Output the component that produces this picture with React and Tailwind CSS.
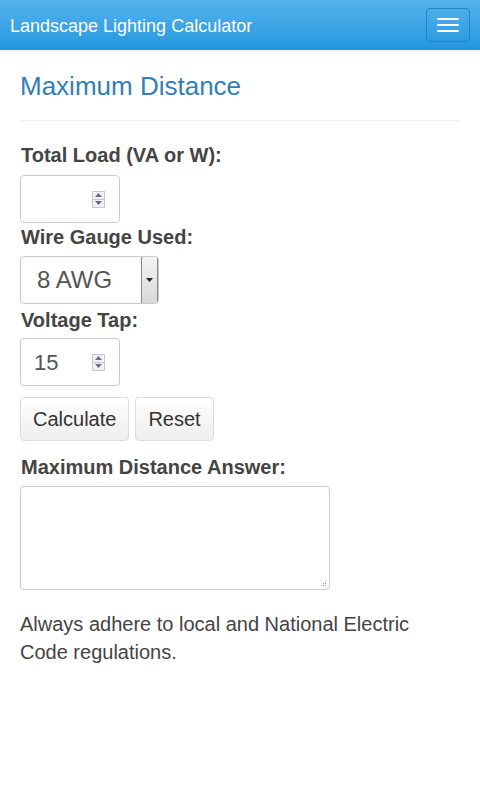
import React from 'react';

const font = { fontFamily: '"Liberation Sans", Arial, sans-serif' };

// small up/down stepper drawn like the old webkit spin button
const Spinner = () => (
  <div className="flex flex-col w-[13px] h-[17px] border border-[#c8c8d0] bg-[#f2f2f6]">
    <div className="flex-1 flex items-center justify-center border-b border-[#c8c8d0]">
      <svg width="7" height="4" viewBox="0 0 7 4"><path d="M0 4 L3.5 0 L7 4 Z" fill="#6a6a8a" /></svg>
    </div>
    <div className="flex-1 flex items-center justify-center">
      <svg width="7" height="4" viewBox="0 0 7 4"><path d="M0 0 L3.5 4 L7 0 Z" fill="#6a6a8a" /></svg>
    </div>
  </div>
);

const NumberBox = ({ value }) => (
  <div className="w-[100px] h-[48px] border border-[#ccc] rounded-[4px] bg-white flex items-center pl-[13px] pr-[14px]">
    <span className="flex-1 text-[22px] text-[#555]">{value}</span>
    <Spinner />
  </div>
);

const Label = ({ children }) => (
  <div className="text-[20px] font-bold text-[#444] leading-[22px] ml-[1px]">{children}</div>
);

export default function App() {
  return (
    <div className="w-[480px] min-h-[800px] bg-white" style={font}>
      {/* navbar */}
      <div className="h-[50px] bg-gradient-to-b from-[#54b4eb] to-[#2196e0] flex items-center justify-between pl-[10px] pr-[10px] shadow-[0_2px_4px_rgba(0,0,0,0.06)]">
        <span className="text-white text-[18px] mt-[2px]">Landscape Lighting Calculator</span>
        <button className="w-[44px] h-[34px] rounded-[4px] border border-[#1e86c9] flex flex-col items-center justify-center gap-[4px]">
          <span className="block w-[22px] h-[2px] bg-white rounded-[1px]" />
          <span className="block w-[22px] h-[2px] bg-white rounded-[1px]" />
          <span className="block w-[22px] h-[2px] bg-white rounded-[1px]" />
        </button>
      </div>

      <div className="px-[20px]">
        <h1 className="text-[26px] text-[#317eb8] pt-[21px] leading-[30px]">Maximum Distance</h1>
        <div className="h-px bg-[#eee] mt-[19px] mb-[23px]" />

        <Label>Total Load (VA or W):</Label>
        <div className="mt-[9px]">
          <NumberBox value="" />
        </div>

        <div className="mt-[3px]"><Label>Wire Gauge Used:</Label></div>
        <div className="mt-[8px] w-[139px] h-[48px] border border-[#ccc] rounded-[4px] bg-white flex items-stretch overflow-hidden">
          <span className="flex-1 flex items-center pl-[16px] text-[24px] text-[#555]">8 AWG</span>
          <div className="w-[17px] my-[-1px] border border-[#888] rounded-[2px] bg-gradient-to-b from-[#f4f4f4] to-[#d8d8d8] flex items-center justify-center">
            <svg width="7" height="4" viewBox="0 0 7 4"><path d="M0 0 L3.5 4 L7 0 Z" fill="#222" /></svg>
          </div>
        </div>

        <div className="mt-[5px]"><Label>Voltage Tap:</Label></div>
        <div className="mt-[7px]">
          <NumberBox value="15" />
        </div>

        <div className="flex gap-[6px] mt-[11px]">
          <button className="h-[44px] px-[12px] border border-[#ddd] rounded-[4px] bg-gradient-to-b from-white to-[#eee] text-[20px] text-[#333]">Calculate</button>
          <button className="h-[44px] px-[12px] border border-[#ddd] rounded-[4px] bg-gradient-to-b from-white to-[#eee] text-[20px] text-[#333]">Reset</button>
        </div>

        <div className="mt-[15px]"><Label>Maximum Distance Answer:</Label></div>
        <div className="mt-[8px] w-[310px] h-[104px] border border-[#ccc] rounded-[4px] bg-white relative">
          <svg className="absolute right-[2px] bottom-[2px]" width="8" height="8" viewBox="0 0 8 8">
            <rect x="6" y="2" width="1" height="1" fill="#aaa" />
            <rect x="4" y="4" width="1" height="1" fill="#aaa" />
            <rect x="6" y="4" width="1" height="1" fill="#aaa" />
            <rect x="2" y="6" width="1" height="1" fill="#aaa" />
            <rect x="4" y="6" width="1" height="1" fill="#aaa" />
            <rect x="6" y="6" width="1" height="1" fill="#aaa" />
          </svg>
        </div>

        <p className="mt-[20px] text-[20px] leading-[28px] text-[#444]">
          Always adhere to local and National Electric Code regulations.
        </p>
      </div>
    </div>
  );
}
